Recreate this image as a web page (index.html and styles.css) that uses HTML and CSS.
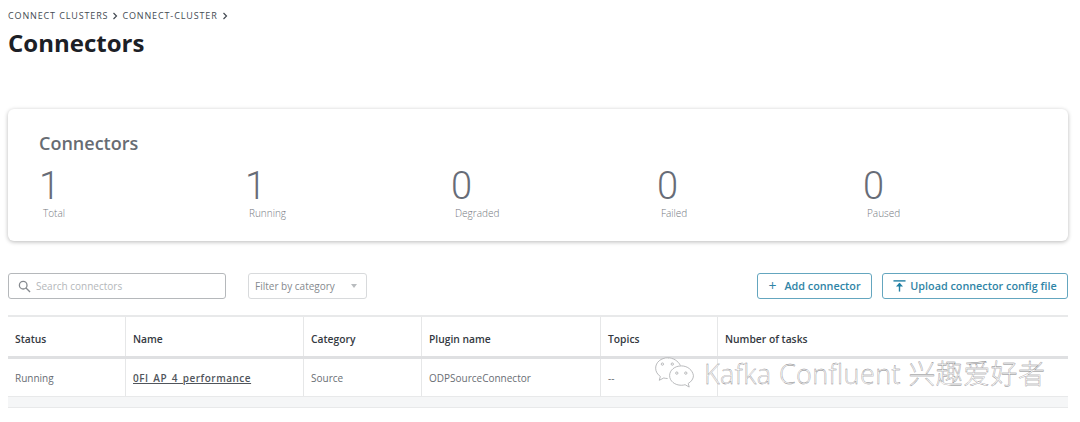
FILE: index.html
```html
<!DOCTYPE html>
<html lang="en">
<head>
    <meta charset="UTF-8">
    <title>Connectors</title>
    <link rel="stylesheet" href="styles.css">
</head>
<body>
    <div class="breadcrumb">
        <span>Connect clusters</span>
        <svg class="crumb-sep" viewBox="0 0 6 8"><path d="M1.5 1l3 3-3 3"/></svg>
        <span>connect-cluster</span>
        <svg class="crumb-sep" viewBox="0 0 6 8"><path d="M1.5 1l3 3-3 3"/></svg>
    </div>
    <h1 class="page-title">Connectors</h1>

    <section class="card">
        <h2 class="card-title">Connectors</h2>
        <div class="stats">
            <div class="stat"><div class="stat-value">1</div><div class="stat-label">Total</div></div>
            <div class="stat"><div class="stat-value">1</div><div class="stat-label">Running</div></div>
            <div class="stat"><div class="stat-value">0</div><div class="stat-label">Degraded</div></div>
            <div class="stat"><div class="stat-value">0</div><div class="stat-label">Failed</div></div>
            <div class="stat"><div class="stat-value">0</div><div class="stat-label">Paused</div></div>
        </div>
    </section>

    <div class="toolbar">
        <div class="search">
            <svg class="search-icon" viewBox="0 0 14 14"><circle cx="5.6" cy="5.6" r="4.1"/><path d="M8.6 8.6l4.4 4.4"/></svg>
            <span>Search connectors</span>
        </div>
        <div class="filter">
            <span>Filter by category</span>
            <span class="caret"></span>
        </div>
        <div class="actions">
            <button class="btn btn-add"><span class="plus">+</span>Add connector</button>
            <button class="btn btn-upload">
                <svg class="upload-icon" viewBox="0 0 14 14"><path d="M0.500 1.500h13"/><path d="M7 13V4"/><path class="arrow" d="M3.200 7.500L7 3.400l3.800 4.100z"/></svg>
                Upload connector config file
            </button>
        </div>
    </div>

    <table class="grid">
        <thead>
            <tr>
                <th class="col-status">Status</th>
                <th class="col-name">Name</th>
                <th class="col-category">Category</th>
                <th class="col-plugin">Plugin name</th>
                <th class="col-topics">Topics</th>
                <th>Number of tasks</th>
            </tr>
        </thead>
        <tbody>
            <tr>
                <td>Running</td>
                <td><a class="link" href="#">0FI_AP_4_performance</a></td>
                <td>Source</td>
                <td>ODPSourceConnector</td>
                <td>--</td>
                <td></td>
            </tr>
        </tbody>
    </table>
    <div class="grid-foot"></div>

    <!-- watermark sits over the table -->
    <div class="watermark">
        <svg class="wm-icon" viewBox="0 0 46 40">
            <path d="M15 2C7.500 2 1.500 7 1.500 13.500c0 3.800 2 7 5.200 9.200L5.500 27l5-2.600c1.300.4 2.800.6 4.300.6M29 10.500C26.500 5.500 21 2 15 2"/>
            <path d="M30 11c-7.300 0-13 4.800-13 10.800S22.700 32.500 30 32.500c1.500 0 2.900-.2 4.200-.6l4.600 2.600-1.100-4c3.500-2 5.800-5.200 5.800-8.700C42.500 15.800 37.300 11 30 11z"/>
            <circle cx="9" cy="9" r="1.300"/><circle cx="20" cy="9" r="1.300"/>
            <circle cx="25" cy="19" r="1.300"/><circle cx="35" cy="19" r="1.300"/>
        </svg>
        <span class="wm-text">Kafka Confluent 兴趣爱好者</span>
    </div>
</body>
</html>
```

FILE: styles.css
```css
body {
    font-family: "Open Sans", "Noto Sans", sans-serif;
    background-color: #fff;
    margin: 0;
    padding: 0 12px 0 8px;
    height: 422px;
    box-sizing: border-box;
    overflow: hidden;
    position: relative;
}
.breadcrumb {
    display: flex;
    align-items: center;
    gap: 4px;
    padding-top: 9px;
    height: 13px;
    font-size: 9px;
    line-height: 13px;
    letter-spacing: 0.87px;
    text-transform: uppercase;
    color: #444b53;
}
.crumb-sep {
    width: 6px;
    height: 8px;
    fill: none;
    stroke: #444b53;
    stroke-width: 1.2;
}
.page-title {
    margin: 5px 0 0;
    font-size: 24px;
    line-height: 32px;
    font-weight: 700;
    color: #1c2026;
}
.card {
    margin-top: 50px;
    height: 132px;
    box-sizing: border-box;
    padding: 21px 31px 0;
    background: #fff;
    border-radius: 6px;
    box-shadow: 0 1px 4px rgba(0, 0, 0, 0.28);
}
.card-title {
    margin: 0;
    font-size: 18px;
    line-height: 26px;
    font-weight: 600;
    color: #676c73;
}
.stats {
    display: flex;
    margin-top: 9px;
}
.stat {
    flex: 0 0 206px;
}
.stat-value {
    font-family: Roboto, sans-serif;
    font-size: 38px;
    line-height: 43px;
    font-weight: 300;
    color: #676c77;
}
.stat-label {
    padding-left: 4px;
    margin-top: -2px;
    font-size: 10px;
    line-height: 14px;
    font-weight: 300;
    color: #75797f;
}
.toolbar {
    display: flex;
    align-items: center;
    margin-top: 32px;
    height: 26px;
}
.search {
    display: flex;
    align-items: center;
    gap: 5px;
    width: 218px;
    height: 26px;
    box-sizing: border-box;
    padding-left: 9px;
    border: 1px solid #b5b8bb;
    border-radius: 3px;
    font-size: 10px;
    color: #b4b7ba;
}
.search-icon {
    width: 13px;
    height: 13px;
    fill: none;
    stroke: #85898e;
    stroke-width: 1.4;
}
.filter {
    display: flex;
    align-items: center;
    justify-content: space-between;
    margin-left: 22px;
    width: 119px;
    height: 26px;
    box-sizing: border-box;
    padding: 0 9px 0 6px;
    border: 1px solid #d8dadc;
    border-radius: 3px;
    font-size: 10px;
    color: #85898e;
}
.caret {
    border-left: 3.5px solid transparent;
    border-right: 3.5px solid transparent;
    border-top: 4px solid #b9bcbf;
}
.actions {
    display: flex;
    gap: 10px;
    margin-left: auto;
}
.btn {
    display: flex;
    align-items: center;
    justify-content: center;
    height: 26px;
    padding: 0 0 1px;
    background: #fff;
    border: 1px solid #64a6bf;
    border-radius: 3px;
    font-family: inherit;
    font-size: 10.8px;
    font-weight: 600;
    color: #2f84a6;
}
.btn-add {
    width: 115px;
}
.btn-upload {
    width: 186px;
    gap: 4px;
}
.plus {
    margin-right: 8px;
    font-size: 14px;
    line-height: 13px;
    font-weight: 400;
}
.upload-icon {
    width: 13px;
    height: 14px;
    fill: none;
    stroke: #1f7ea3;
    stroke-width: 1.5;
}
.upload-icon .arrow {
    fill: #1f7ea3;
    stroke: none;
}
.grid {
    margin-top: 16px;
    width: 100%;
    border-collapse: collapse;
    table-layout: fixed;
    border-top: 2px solid #e8e9ea;
    font-size: 10px;
}
.grid th {
    height: 35px;
    padding: 4px 9px 0 7px;
    text-align: left;
    font-size: 10.3px;
    font-weight: 600;
    color: #34393f;
    border-bottom: 3px solid #dfe0e2;
    border-right: 1px solid #e6e7e8;
}
.grid td {
    height: 37px;
    padding: 0 9px 0 7px;
    color: #696e74;
    border-right: 1px solid #e6e7e8;
}
.grid th:last-child,
.grid td:last-child {
    border-right: none;
}
.col-status { width: 101px; }
.col-name { width: 161px; }
.col-category { width: 101px; }
.col-plugin { width: 162px; }
.col-topics { width: 100px; }
.link {
    font-weight: 600;
    color: #50555b;
    letter-spacing: 0.5px;
}
.grid-foot {
    height: 10px;
    background: #f5f6f7;
    border-top: 1px solid #e8e9ea;
    border-bottom: 1px solid #e8e9ea;
}
.watermark {
    position: absolute;
    left: 653px;
    top: 355px;
    display: flex;
    align-items: center;
    gap: 7px;
    height: 38px;
}
.wm-icon {
    width: 44px;
    height: 36px;
    fill: #fff;
    stroke: #a9abad;
    stroke-width: 0.9;
}
.wm-text {
    font-size: 27px;
    line-height: 38px;
    font-weight: 300;
    font-family: "Open Sans", "Noto Sans CJK SC", sans-serif;
    color: #fff;
    -webkit-text-stroke: 0.35px #7f8184;
    letter-spacing: 0.4px;
    white-space: nowrap;
}
```
